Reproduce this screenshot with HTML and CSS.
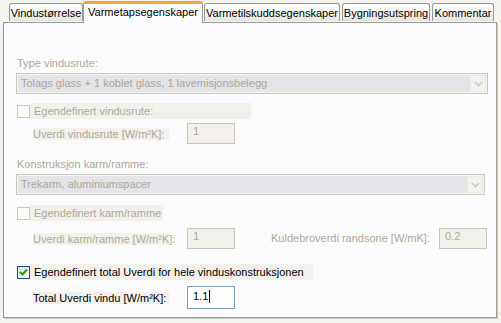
FILE: index.html
```html
<!DOCTYPE html>
<html>
<head>
<meta charset="utf-8">
<link rel="stylesheet" href="styles.css">
</head>
<body>
<div class="dialog">
  <div class="tabs">
    <div class="tab t1">Vindustørrelse</div>
    <div class="tab active t2">Varmetapsegenskaper</div>
    <div class="tab t3">Varmetilskuddsegenskaper</div>
    <div class="tab t4">Bygningsutspring</div>
    <div class="tab t5">Kommentar</div>
  </div>
  <div class="panel">
    <div class="lbl disabled first">Type vindusrute:</div>
    <div class="combo combo1">
      <span class="combo-text">Tolags glass + 1 koblet glass, 1 lavemisjonsbelegg</span>
      <span class="combo-btn"><svg width="9" height="6" viewBox="0 0 9 6"><path d="M1 1 L4.5 4.5 L8 1" fill="none" stroke="#c9c8c0" stroke-width="1.6"/></svg></span>
    </div>
    <div class="check-row r1">
      <span class="cbox off"></span>
      <span class="check-lbl disabled w1">Egendefinert vindusrute:</span>
    </div>
    <div class="field-row fr1">
      <span class="field-lbl disabled">Uverdi vindusrute [W/m²K]:</span>
      <span class="input off">1</span>
    </div>
    <div class="lbl disabled second">Konstruksjon karm/ramme:</div>
    <div class="combo combo2">
      <span class="combo-text">Trekarm, aluminiumspacer</span>
      <span class="combo-btn"><svg width="9" height="6" viewBox="0 0 9 6"><path d="M1 1 L4.5 4.5 L8 1" fill="none" stroke="#c9c8c0" stroke-width="1.6"/></svg></span>
    </div>
    <div class="check-row r2">
      <span class="cbox off"></span>
      <span class="check-lbl disabled w2">Egendefinert karm/ramme</span>
    </div>
    <div class="field-row fr2">
      <span class="field-lbl disabled">Uverdi karm/ramme [W/m²K]:</span>
      <span class="input off">1</span>
      <span class="field-lbl2 disabled">Kuldebroverdi randsone [W/mK]:</span>
      <span class="input off">0.2</span>
    </div>
    <div class="check-row r3">
      <span class="cbox on"><svg width="11" height="11" viewBox="0 0 11 11"><path d="M2 5 L4.5 7.5 L9 2.5" fill="none" stroke="#21a121" stroke-width="2.2"/></svg></span>
      <span class="check-lbl w3">Egendefinert total Uverdi for hele vinduskonstruksjonen</span>
    </div>
    <div class="field-row fr3">
      <span class="field-lbl">Total Uverdi vindu [W/m²K]:</span>
      <span class="input on">1.1<span class="caret"></span></span>
    </div>
  </div>
</div>
</body>
</html>
```

FILE: styles.css
```css
* { box-sizing: border-box; }
html, body { margin: 0; padding: 0; }
body {
  width: 501px;
  height: 323px;
  background: #f4f3ee;
  font-family: Tahoma, "Liberation Sans", Arial, sans-serif;
  font-size: 11px;
  color: #000;
  overflow: hidden;
}
.dialog {
  padding: 0 4px 0 3px;
  display: flex;
  flex-direction: column;
}
.tabs {
  display: flex;
  align-items: flex-end;
  height: 22px;
  padding-left: 6px;
  position: relative;
  z-index: 1;
}
.tab {
  height: 18px;
  border: 1px solid #919b9c;
  border-bottom: none;
  border-radius: 3px 3px 0 0;
  background: linear-gradient(#ffffff, #f3f3ef 60%, #e4e3db);
  padding: 2px 0 0 0;
  text-align: center;
  white-space: nowrap;
  margin-bottom: 1px;
  line-height: 14px;
}
.t1 { width: 74px; }
.t2 { width: 120px; }
.t3 { width: 136px; margin-left: 1px; }
.t4 { width: 88px; margin-left: 2px; }
.t5 { width: 62px; margin-left: 2px; }
.tab.active {
  height: 22px;
  margin-bottom: -1px;
  background: #fcfcfe;
  border-top: 3px solid #ffc83c;
  border-color: #919b9c;
  border-top-color: #f5a83a;
  padding-top: 1px;
  line-height: 15px;
}
.panel {
  height: 296px;
  border: 1px solid #919b9c;
  border-top-color: #919b9c;
  background: #fcfcfe;
  padding: 0 0 0 12px;
  display: flex;
  flex-direction: column;
  align-items: flex-start;
  box-shadow: 1px 1px 0 #d0cec4;
}
.disabled { color: #aca899; }
.lbl { height: 13px; line-height: 13px; padding-left: 1px; }
.lbl.first { margin-top: 34px; }
.lbl.second { margin-top: 14px; }
.combo {
  height: 21px;
  border: 1px solid #c9c7ba;
  background: #e3e3e8;
  box-shadow: inset 0 0 0 1px #f6f6f2;
  display: flex;
  align-items: center;
  justify-content: space-between;
  padding: 0 1px 0 4px;
}
.combo1 { width: 472px; margin-top: 3px; }
.combo2 { width: 469px; margin-top: 3px; }
.combo-text { color: #aca899; line-height: 13px; }
.combo-btn {
  width: 16px;
  height: 17px;
  background: #f1f1ed;
  border: 1px solid #e8e7e0;
  display: flex;
  align-items: center;
  justify-content: center;
}
.check-row {
  display: flex;
  align-items: center;
  height: 16px;
}
.r1 { margin-top: 9px; }
.r2 { margin-top: 10px; }
.r3 { margin-top: 15px; }
.check-lbl {
  background: #f1f0ea;
  height: 16px;
  line-height: 16px;
  padding-left: 4px;
}
.w1 { width: 221px; }
.w2 { width: 133px; }
.w3 { width: 283px; }
.cbox {
  width: 13px;
  height: 13px;
  margin: 0 0 0 1px;
  border: 1px solid #cac8bb;
  background: #fcfcfb;
  display: flex;
  align-items: center;
  justify-content: center;
}
.cbox.on {
  border-color: #1c5180;
  background: linear-gradient(135deg, #dcdcd7, #ffffff);
}
.field-row {
  display: flex;
  align-items: center;
  height: 21px;
  padding-left: 17px;
}
.fr1 { margin-top: 4px; }
.fr2 { margin-top: 7px; }
.fr3 { margin-top: 6px; height: 23px; }
.field-lbl {
  width: 136px;
  height: 12px;
  line-height: 12px;
  background: #f1f0ea;
  white-space: nowrap;
  margin-right: 18px;
}
.field-lbl2 {
  width: 165px;
  white-space: nowrap;
  line-height: 13px;
  margin-left: 36px;
  margin-right: 3px;
}
.input {
  width: 48px;
  height: 21px;
  border: 1px solid #c9c7ba;
  background: #f1f0ea;
  padding: 1px 0 0 5px;
  line-height: 13px;
}
.input.off { color: #aca899; }
.input.on {
  height: 23px;
  border-color: #7f9db9;
  background: #ffffff;
  color: #000;
  padding-top: 3px;
  display: flex;
  align-items: flex-start;
}
.caret {
  display: inline-block;
  width: 1px;
  height: 13px;
  background: #000;
  margin-left: 1px;
}
```
